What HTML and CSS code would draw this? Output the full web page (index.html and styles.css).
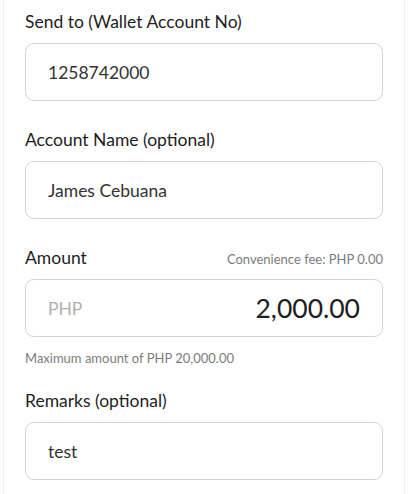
FILE: index.html
```html
<!DOCTYPE html>
<html>
<head>
<meta charset="utf-8">
<link rel="stylesheet" href="styles.css">
</head>
<body>
<div class="card">
  <div class="field">
    <div class="label">Send to (Wallet Account No)</div>
    <div class="input"><span class="value">1258742000</span></div>
  </div>
  <div class="field">
    <div class="label">Account Name (optional)</div>
    <div class="input"><span class="value">James Cebuana</span></div>
  </div>
  <div class="field">
    <div class="label-row">
      <span class="label">Amount</span>
      <span class="note">Convenience fee: PHP 0.00</span>
    </div>
    <div class="input amount">
      <span class="currency">PHP</span>
      <span class="big">2,000.00</span>
    </div>
    <div class="hint">Maximum amount of PHP 20,000.00</div>
  </div>
  <div class="field">
    <div class="label">Remarks (optional)</div>
    <div class="input"><span class="value">test</span></div>
  </div>
</div>
</body>
</html>
```
FILE: styles.css
```css
html, body {
  margin: 0;
  padding: 0;
  background: #ffffff;
}
body {
  font-family: Lato, "Noto Sans", sans-serif;
  color: #1c1c1c;
  padding: 0 3px;
}
.card {
  box-sizing: border-box;
  height: 494px;
  border-left: 1px solid #f0f0f0;
  border-right: 1px solid #f0f0f0;
  padding: 10px 21px 0 21px;
  display: flex;
  flex-direction: column;
  gap: 27px;
}
.field {
  display: flex;
  flex-direction: column;
}
.label {
  font-size: 17.5px;
  line-height: 24px;
  color: #1e1e1e;
}
.label-row {
  display: flex;
  justify-content: space-between;
  align-items: baseline;
}
.note {
  font-size: 13px;
  color: #7c7c7c;
}
.input {
  margin-top: 9px;
  height: 58px;
  box-sizing: border-box;
  border: 1px solid #d4d4d4;
  border-radius: 9px;
  display: flex;
  align-items: center;
  padding: 0 22px;
}
.value {
  font-size: 17.5px;
  color: #333333;
}
.amount {
  justify-content: space-between;
}
.currency {
  font-size: 17.5px;
  color: #b0b0b0;
}
.big {
  font-size: 26.5px;
  color: #1e1e1e;
}
.hint {
  margin-top: 13px;
  font-size: 13px;
  line-height: 16px;
  color: #7c7c7c;
}
.field:last-child {
  margin-top: -4px;
}
```
